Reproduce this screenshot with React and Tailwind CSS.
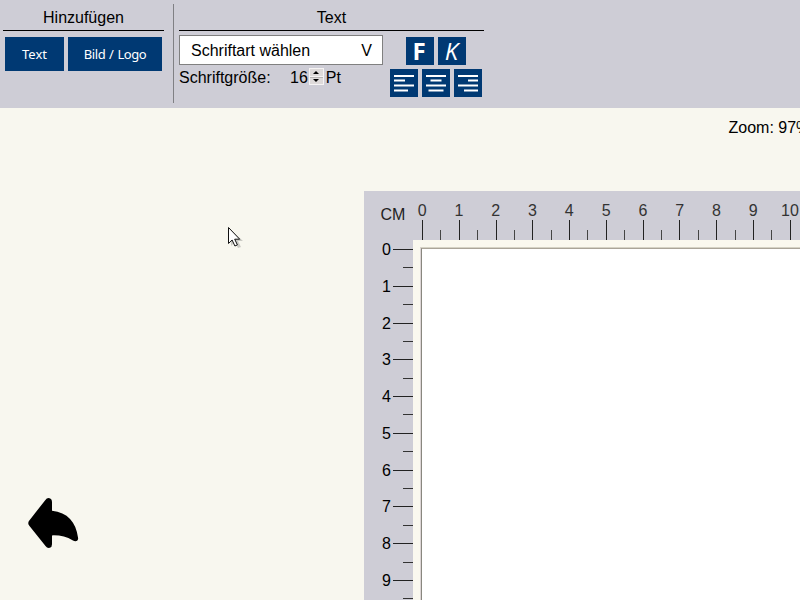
import React from "react";

const marks = [0, 1, 2, 3, 4, 5, 6, 7, 8, 9, 10];

function ToolButton({ className, children }) {
  return (
    <button
      className={`flex h-[34px] items-center justify-center bg-[#003973] pt-px font-['Noto_Sans',sans-serif] text-[13px] whitespace-pre text-white ${className}`}
    >
      {children}
    </button>
  );
}

function IconButton({ label, children }) {
  return (
    <button aria-label={label} className="flex size-7 items-center justify-center bg-[#003973] text-white">
      {children}
    </button>
  );
}

function AlignIcon({ path }) {
  return (
    <svg width="28" height="28" viewBox="0 0 28 28" fill="none" stroke="white" strokeWidth="2">
      <path d={path} />
    </svg>
  );
}

function Toolbar() {
  return (
    <header className="flex h-[108px] shrink-0 bg-[#cecdd6]">
      <section className="ml-[3px] w-[161px]">
        <h2 className="h-[31px] border-b border-black pt-1.5 text-center leading-6">Hinzufügen</h2>
        <div className="flex gap-1 pt-1.5 pl-0.5">
          <ToolButton className="w-[59px]">Text</ToolButton>
          <ToolButton className="w-[94px] tracking-[-0.45px] [word-spacing:1px]">Bild / Logo</ToolButton>
        </div>
      </section>
      <div className="mt-1 ml-[9px] h-[99px] w-px bg-[#808084]" />
      <section className="ml-[5px] w-[305px]">
        <h2 className="h-[31px] border-b border-black pt-1.5 text-center leading-6">Text</h2>
        <div className="flex">
          <div className="w-[204px] pt-1">
            <div className="flex h-[30px] items-center justify-between border border-[#808080] bg-white pt-0.5 pr-2.5 pl-[11px]">
              <span>Schriftart wählen</span>
              <span>V</span>
            </div>
            <div className="flex h-[25px] items-center">
              <span className="w-[111px]">Schriftgröße:</span>
              <span>16</span>
              <span className="mb-0.5 ml-px flex h-[17px] w-[15px] flex-col gap-px bg-[#f6f4f4] p-px">
                <span className="flex flex-1 items-center justify-center bg-[#dedada]">
                  <svg width="6" height="3" viewBox="0 0 6 3"><path d="M0 3 3 0 6 3z" /></svg>
                </span>
                <span className="flex flex-1 items-center justify-center border-t border-[#b8b4b4] bg-[#dedada]">
                  <svg width="6" height="3" viewBox="0 0 6 3"><path d="M0 0h6L3 3z" /></svg>
                </span>
              </span>
              <span className="ml-0.5">Pt</span>
            </div>
          </div>
          <div className="ml-[7px] flex w-[92px] flex-col items-center gap-1 pt-1.5">
            <div className="flex gap-1">
              <IconButton label="Fett">
                <span className="pr-0.5 font-['Open_Sans',sans-serif] text-[24px] font-bold">F</span>
              </IconButton>
              <IconButton label="Kursiv">
                <span className="pr-px font-['Open_Sans',sans-serif] text-[24px] italic">K</span>
              </IconButton>
            </div>
            <div className="flex gap-1">
              <IconButton label="Linksbündig"><AlignIcon path="M4 7h20M4 11.5h11M4 16.5h20M4 21.5h14" /></IconButton>
              <IconButton label="Zentriert"><AlignIcon path="M4 7h20M8.5 11.5h11M4 16.5h20M6.5 21.5h15" /></IconButton>
              <IconButton label="Rechtsbündig"><AlignIcon path="M4 7h20M14 11.5h10M4 16.5h20M10 21.5h14" /></IconButton>
            </div>
          </div>
        </div>
      </section>
    </header>
  );
}

function TopRuler() {
  return (
    <div className="flex h-[49px] pl-[58px]">
      {marks.map((n) => (
        <div key={n} className="w-[36.77px] shrink-0">
          <div className="-ml-3 h-[29px] w-[24.5px] pt-2 text-center leading-6 text-[#333]">{n}</div>
          <div className="flex h-5 items-end">
            <div className="h-5 w-px bg-[#222]" />
            <div className="ml-[17.4px] h-2.5 w-px bg-[#444]" />
          </div>
        </div>
      ))}
    </div>
  );
}

function LeftRuler() {
  return (
    <div className="w-[49px] shrink-0 pt-[9px]">
      {marks.map((n) => (
        <div key={n} className="h-[36.77px]">
          <div className="flex h-px items-center justify-end">
            <span className="mr-0.5 pt-px leading-6">{n}</span>
            <span className="h-px w-5 bg-[#222]" />
          </div>
          <div className="mt-[17.4px] ml-auto h-px w-2.5 bg-[#333]" />
        </div>
      ))}
    </div>
  );
}

function Canvas() {
  return (
    <div className="relative h-[409px] overflow-hidden bg-[#cecdd6]">
      <TopRuler />
      <div className="flex h-[360px] overflow-hidden">
        <LeftRuler />
        <div className="flex-1 bg-[#faf8ef] pt-[7px] pl-[7px]">
          <div className="h-full border-t border-l border-t-[#d5d2c5] border-l-[#dcd5d5]">
            <div className="h-full border-t border-l border-t-[#aaa499] border-l-[#89877f] bg-white" />
          </div>
        </div>
      </div>
      <span className="absolute top-3 left-[16.5px] leading-6 text-[#222]">CM</span>
    </div>
  );
}

function Cursor() {
  return (
    <svg className="absolute top-[226px] left-[227px]" width="18" height="24" viewBox="0 0 18 24">
      <path d="M4 4v16l4-4 3 6 3-1-3-6h5z" fill="#777" opacity=".35" />
      <path d="M1.5 1.5v16l3.6-3.5 2.8 6 2.5-1.1-2.7-5.7h5z" fill="white" stroke="#111" strokeWidth="1" />
    </svg>
  );
}

export default function App() {
  return (
    <div className="relative flex h-[600px] w-[800px] flex-col overflow-hidden bg-[#f8f7ef] font-['Liberation_Sans',Arial,sans-serif] text-[16px] text-black">
      <Toolbar />
      <main className="flex flex-1">
        <div className="w-[364px] shrink-0 pt-[389px] pl-[27px]">
          <button aria-label="Rückgängig">
            <svg width="52" height="52" viewBox="0 0 52 52">
              <path d="M2.3 23.5Q.2 26.2 2.3 28.8L18.5 49Q20.2 51.4 22.8 50.8 25 50.3 25 47.2V38.4Q37 38 45.5 43.2C49 45.3 51.8 43.8 51 40.5 49 25 40.5 15.5 25 13.8V5.5Q25 1.7 22.5 1.2 20 .7 18 3.4Z" />
            </svg>
          </button>
        </div>
        <div className="w-[436px] overflow-hidden">
          <div className="h-[83px] pt-2 pl-[364.5px] leading-6 whitespace-nowrap">Zoom: 97%</div>
          <Canvas />
        </div>
      </main>
      <Cursor />
    </div>
  );
}
